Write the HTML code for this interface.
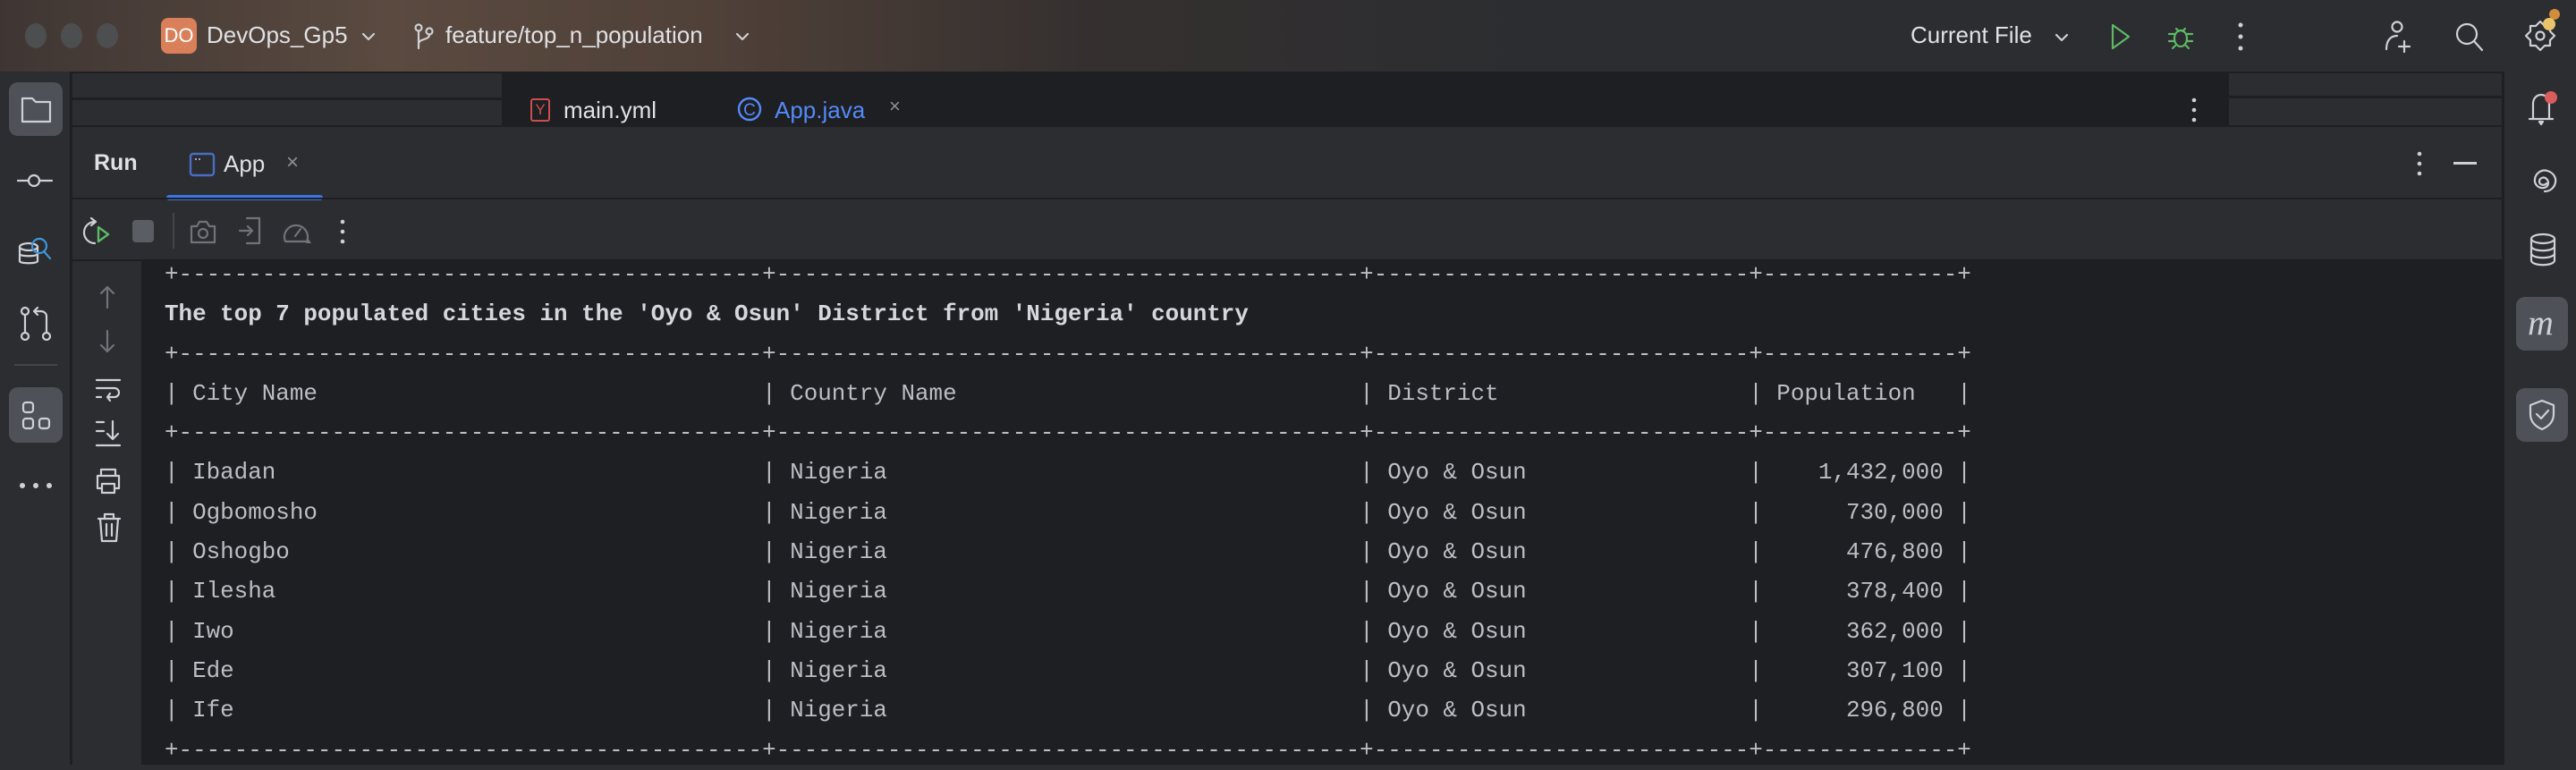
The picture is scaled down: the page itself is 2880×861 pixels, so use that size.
<!DOCTYPE html>
<html><head><meta charset="utf-8">
<style>
*{margin:0;padding:0;box-sizing:border-box}
body{width:2880px;height:855px;overflow:hidden;background:#2b2d30;font-family:"Liberation Sans",sans-serif;position:relative;color:#dfe1e5}
.abs{position:absolute}
#title{left:0;top:0;width:2880px;height:80px;background:linear-gradient(90deg,#3f3633 0%,#5a4a40 15%,#4f4038 28%,#35302f 42%,#2b2d30 60%)}
.tl{width:24px;height:28px;border-radius:50%;background:#4d4e50;top:26px}
.t{font-size:26px;color:#dfe1e5;white-space:nowrap}
svg{position:absolute;overflow:visible}
.ico{fill:none;stroke:#ced0d6;stroke-width:2.2;stroke-linecap:round;stroke-linejoin:round}
.dim{stroke:#6f737a}
#console{left:158px;top:292px;width:2640px;height:563px;background:#1e1f22}
pre{position:absolute;left:184px;top:285px;font-family:"Liberation Mono",monospace;font-size:25.9px;line-height:44.3px;color:#bcbec4}
pre b{color:#d5d7dc}
.sel{background:#4e5157;border-radius:10px}
</style></head><body>
<div id="title" class="abs"></div>
<div class="abs tl" style="left:28px"></div>
<div class="abs tl" style="left:68px"></div>
<div class="abs tl" style="left:108px"></div>
<div class="abs" style="left:180px;top:20px;width:40px;height:40px;border-radius:8px;background:#d9805a;color:#fff;font-size:22px;line-height:40px;text-align:center">DO</div>
<div class="abs t" style="left:231px;top:24px">DevOps_Gp5</div>
<svg style="left:404px;top:36px" width="16" height="10"><path class="ico" d="M2 2l6 6 6-6"/></svg>
<svg style="left:462px;top:26px" width="24" height="30"><g class="ico" stroke-width="2"><circle cx="6" cy="5" r="3.5"/><circle cx="18" cy="9" r="3.5"/><path d="M6 9v19M18 13c0 6-12 4-12 10"/></g></svg>
<div class="abs t" style="left:498px;top:24px">feature/top_n_population</div>
<svg style="left:822px;top:36px" width="16" height="10"><path class="ico" d="M2 2l6 6 6-6"/></svg>
<div class="abs t" style="left:2136px;top:24px">Current File</div>
<svg style="left:2297px;top:37px" width="16" height="10"><path class="ico" d="M2 2l6 6 6-6"/></svg>
<svg style="left:2358px;top:26px" width="26" height="30"><path class="ico" style="stroke:#5fb865" stroke-width="2.6" d="M4 2l18 13-18 13z"/></svg>
<svg style="left:2423px;top:26px" width="30" height="30"><g class="ico" style="stroke:#5fb865" stroke-width="2.6"><ellipse cx="15" cy="17" rx="7" ry="9"/><path d="M10 6l3 3M20 6l-3 3M2 12h6M22 12h6M2 20h6M22 20h6M6 28l3-3M24 28l-3-3"/></g></svg>
<svg style="left:2500px;top:24px" width="10" height="34"><g fill="#ced0d6"><circle cx="5" cy="4" r="2.5"/><circle cx="5" cy="17" r="2.5"/><circle cx="5" cy="30" r="2.5"/></g></svg>
<svg style="left:2665px;top:22px" width="34" height="38"><g class="ico"><circle cx="15" cy="8" r="5.5"/><path d="M3 33c0-10 5-15 12-15M23 24v12M17 30h12"/></g></svg>
<svg style="left:2744px;top:24px" width="34" height="34"><g class="ico" stroke-width="2.4"><circle cx="14" cy="14" r="11"/><path d="M22 22l9 10"/></g></svg>
<svg style="left:2822px;top:22px" width="40" height="38"><g class="ico"><path d="M18 2l5 5h6v6l5 5-5 5v6h-6l-5 5-5-5H7v-6l-5-5 5-5V7h6z"/><circle cx="18" cy="18" r="4.5"/></g><circle cx="34" cy="-6" r="6" fill="#d38c3c"/><circle cx="28" cy="5" r="7" fill="#e9c46a"/></svg>

<div class="abs" style="left:78px;top:80px;width:3px;height:775px;background:#1e1f22"></div>
<div class="abs sel" style="left:10px;top:92px;width:60px;height:60px"></div>
<svg style="left:22px;top:106px" width="38" height="34"><path class="ico" d="M3 4h11l4 4h16v22H3z"/></svg>
<svg style="left:18px;top:194px" width="44" height="16"><g class="ico"><circle cx="20" cy="8" r="6"/><path d="M2 8h12M26 8h14"/></g></svg>
<svg style="left:18px;top:262px" width="44" height="40"><g class="ico"><ellipse cx="14" cy="14" rx="10" ry="4"/><path d="M4 14v16c0 3 20 3 20 0V14M4 22c0 3 20 3 20 0"/></g><g class="ico" style="stroke:#3d95d9" stroke-width="3.4"><circle cx="26" cy="13" r="8"/><path d="M31 19l7 8"/></g></svg>
<svg style="left:22px;top:342px" width="38" height="42"><g class="ico"><circle cx="6" cy="6" r="4"/><circle cx="6" cy="34" r="4"/><circle cx="30" cy="34" r="4"/><path d="M6 10v20M30 30V12c0-4-3-6-7-6h-6M20 2l-4 4 4 4"/></g></svg>
<div class="abs" style="left:16px;top:407px;width:48px;height:2px;background:#43454a"></div>
<div class="abs sel" style="left:10px;top:433px;width:60px;height:62px"></div>
<svg style="left:24px;top:448px" width="34" height="34"><g class="ico"><rect x="2" y="2" width="11" height="11" rx="3"/><rect x="2" y="20" width="11" height="11" rx="3"/><rect x="20" y="20" width="11" height="11" rx="3"/></g></svg>
<svg style="left:20px;top:538px" width="40" height="10"><g fill="#ced0d6"><circle cx="5" cy="5" r="3"/><circle cx="20" cy="5" r="3"/><circle cx="35" cy="5" r="3"/></g></svg>

<div class="abs" style="left:2797px;top:80px;width:3px;height:775px;background:#1e1f22"></div>
<svg style="left:2822px;top:100px" width="44" height="44"><g class="ico"><path d="M10 32V16c0-6 4-10 9-10M19 6c5 0 9 4 9 10v16M6 33h26"/><path d="M17 36l2 3 2-3z" fill="#ced0d6"/></g><circle cx="30" cy="9" r="7" fill="#db5c5c"/></svg>
<svg style="left:2823px;top:183px" width="40" height="40"><path class="ico" stroke-width="2.6" d="M24 22c-2 3-8 2-8-2s5-6 8-3 3 9-3 10-11-4-10-10 7-11 14-9 10 8 9 13-5 10-12 10"/></svg>
<svg style="left:2827px;top:260px" width="34" height="40"><g class="ico" stroke-width="2.4"><ellipse cx="16" cy="7" rx="13" ry="5"/><path d="M3 7v24c0 7 26 7 26 0V7M3 15c0 7 26 7 26 0M3 23c0 7 26 7 26 0"/></g></svg>
<div class="abs sel" style="left:2813px;top:332px;width:58px;height:60px"></div>
<div class="abs" style="left:2826px;top:337px;font-family:'Liberation Serif',serif;font-style:italic;font-size:40px;color:#ced0d6">m</div>
<div class="abs sel" style="left:2813px;top:434px;width:58px;height:60px"></div>
<svg style="left:2826px;top:445px" width="34" height="38"><g class="ico" stroke-width="2.4"><path d="M16 3l13 5v10c0 9-6 14-13 17-7-3-13-8-13-17V8z"/><path d="M10 18l5 5 8-9"/></g></svg>

<div class="abs" style="left:81px;top:80px;width:2716px;height:62px;background:#1e1f22"></div>
<div class="abs" style="left:81px;top:82px;width:480px;height:27px;background:#2b2d30"></div>
<div class="abs" style="left:81px;top:112px;width:480px;height:28px;background:#2b2d30"></div>
<div class="abs" style="left:2492px;top:82px;width:305px;height:25px;background:#2b2d30"></div>
<div class="abs" style="left:2492px;top:110px;width:305px;height:30px;background:#2b2d30"></div>
<div class="abs" style="left:593px;top:110px;width:22px;height:26px;border:2px solid #c94f4f;border-radius:3px;color:#c94f4f;font-size:17px;text-align:center;line-height:22px">Y</div>
<div class="abs t" style="left:630px;top:108px">main.yml</div>
<svg style="left:824px;top:107px" width="30" height="30"><circle cx="14" cy="15" r="12" fill="none" stroke="#548af7" stroke-width="2.4"/><text x="14" y="22" text-anchor="middle" font-family="Liberation Sans" font-size="19" fill="#548af7">C</text></svg>
<div class="abs t" style="left:866px;top:108px;color:#548af7">App.java</div>
<div class="abs t" style="left:994px;top:106px;color:#8c8f95;font-size:22px">×</div>
<svg style="left:2448px;top:108px" width="10" height="30"><g fill="#ced0d6"><circle cx="5" cy="4" r="2.3"/><circle cx="5" cy="15" r="2.3"/><circle cx="5" cy="26" r="2.3"/></g></svg>

<div class="abs t" style="left:105px;top:168px;font-weight:bold;font-size:25px">Run</div>
<svg style="left:211px;top:170px" width="30" height="28"><rect x="2" y="2" width="26" height="24" rx="3" fill="none" stroke="#4a6ec2" stroke-width="2.4"/><path d="M7 8h2M11 8h2" stroke="#8fa8e0" stroke-width="2"/></svg>
<div class="abs t" style="left:250px;top:168px">App</div>
<div class="abs t" style="left:320px;top:168px;color:#8c8f95;font-size:24px">×</div>
<div class="abs" style="left:186px;top:218px;width:175px;height:6px;border-radius:3px;background:#3d74e0"></div>
<svg style="left:2700px;top:168px" width="10" height="30"><g fill="#ced0d6"><circle cx="5" cy="4" r="2.3"/><circle cx="5" cy="15" r="2.3"/><circle cx="5" cy="26" r="2.3"/></g></svg>
<div class="abs" style="left:2743px;top:181px;width:26px;height:3px;background:#ced0d6"></div>
<div class="abs" style="left:81px;top:221px;width:2716px;height:2px;background:#1e1f22"></div>

<svg style="left:92px;top:244px" width="34" height="32"><path class="ico" d="M14 4a11 11 0 1 0 0 24M10 0l5 4-5 4"/><path d="M18 10l11 8-11 8z" fill="none" stroke="#5fb865" stroke-width="2.4" stroke-linejoin="round"/></svg>
<div class="abs" style="left:148px;top:246px;width:24px;height:25px;border-radius:4px;background:#5a5d63"></div>
<div class="abs" style="left:193px;top:238px;width:2px;height:40px;background:#43454a"></div>
<svg style="left:211px;top:244px" width="32" height="30"><g class="ico dim"><path d="M3 9h6l3-5h8l3 5h6v18H3z"/><circle cx="16" cy="17" r="5"/></g></svg>
<svg style="left:266px;top:242px" width="30" height="32"><g class="ico dim"><path d="M10 2h14v28H10M2 16h14M11 11l5 5-5 5"/></g></svg>
<svg style="left:314px;top:244px" width="36" height="32"><g class="ico dim"><path d="M5 26a13 13 0 1 1 24 0zM16 20l6-8"/></g><path d="M30 22l4 6h-6z" fill="#6f737a"/></svg>
<svg style="left:378px;top:244px" width="10" height="30"><g fill="#ced0d6"><circle cx="5" cy="4" r="2.3"/><circle cx="5" cy="15" r="2.3"/><circle cx="5" cy="26" r="2.3"/></g></svg>
<div class="abs" style="left:81px;top:290px;width:2716px;height:2px;background:#1e1f22"></div>

<div id="console" class="abs"></div>
<svg style="left:110px;top:318px" width="20" height="28"><path class="ico dim" d="M10 26V3M3 10l7-7 7 7"/></svg>
<svg style="left:110px;top:368px" width="20" height="28"><path class="ico dim" d="M10 2v23M3 18l7 7 7-7"/></svg>
<svg style="left:106px;top:422px" width="30" height="28"><path class="ico" d="M2 3h26M2 12h20a5 5 0 0 1 0 10h-8M17 18l-3 4 3 4M2 22h5"/></svg>
<svg style="left:106px;top:468px" width="30" height="32"><path class="ico" d="M2 4h8M2 14h8M2 30h26M20 3v20M14 17l6 6 6-6"/></svg>
<svg style="left:106px;top:522px" width="30" height="32"><g class="ico"><path d="M7 10V3h16v7M3 10h24v14h-4M7 24H3V10"/><rect x="8" y="19" width="14" height="10"/></g></svg>
<svg style="left:108px;top:572px" width="28" height="36"><g class="ico"><path d="M2 8h24M9 8V3h10v5M4 8l2 25h16l2-25M11 14v13M17 14v13"/></g></svg>
<pre>+------------------------------------------+------------------------------------------+---------------------------+--------------+
<b>The top 7 populated cities in the 'Oyo &amp; Osun' District from 'Nigeria' country</b>
+------------------------------------------+------------------------------------------+---------------------------+--------------+
| City Name                                | Country Name                             | District                  | Population   |
+------------------------------------------+------------------------------------------+---------------------------+--------------+
| Ibadan                                   | Nigeria                                  | Oyo &amp; Osun                |    1,432,000 |
| Ogbomosho                                | Nigeria                                  | Oyo &amp; Osun                |      730,000 |
| Oshogbo                                  | Nigeria                                  | Oyo &amp; Osun                |      476,800 |
| Ilesha                                   | Nigeria                                  | Oyo &amp; Osun                |      378,400 |
| Iwo                                      | Nigeria                                  | Oyo &amp; Osun                |      362,000 |
| Ede                                      | Nigeria                                  | Oyo &amp; Osun                |      307,100 |
| Ife                                      | Nigeria                                  | Oyo &amp; Osun                |      296,800 |
+------------------------------------------+------------------------------------------+---------------------------+--------------+</pre>
</body></html>
